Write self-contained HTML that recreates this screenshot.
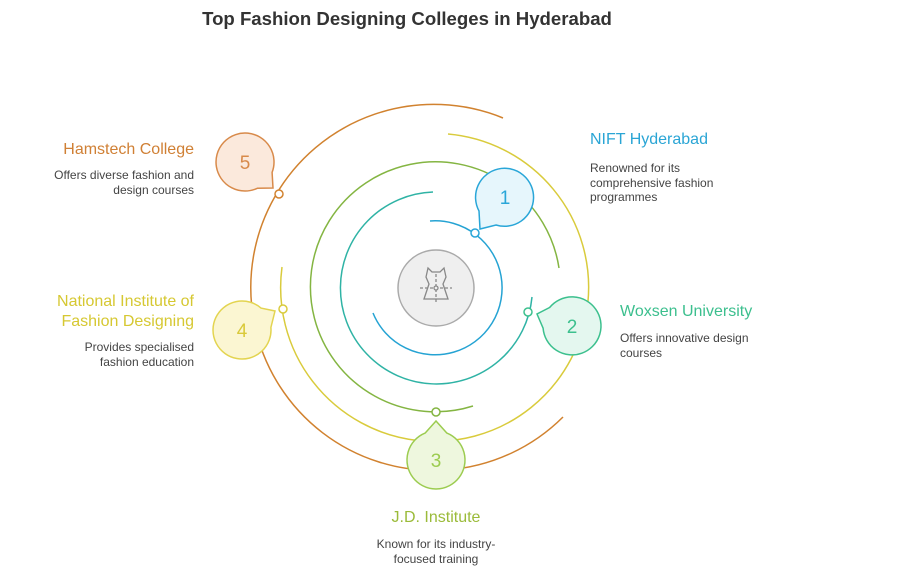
<!DOCTYPE html>
<html><head><meta charset="utf-8"><style>
body{margin:0;width:900px;height:569px;background:#fff;font-family:"Liberation Sans",sans-serif;position:relative;overflow:hidden}
.t{position:absolute;font-size:16px;white-space:nowrap}
.d{position:absolute;font-size:12px;color:#444;line-height:14.5px;white-space:nowrap}
.r{text-align:right}
</style></head><body>
<div style="position:absolute;left:0;width:814px;top:8px;text-align:center;font-weight:bold;font-size:18.6px;color:#333">Top Fashion Designing Colleges in Hyderabad</div>
<svg width="900" height="569" style="position:absolute;left:0;top:0" fill="none" stroke-width="1.5">
<path d="M430 221 A67 67 0 1 1 373 313" stroke="#25a3d3"/>
<path d="M433 192 A96 96 0 1 0 532 297" stroke="#2fb3a5"/>
<path d="M559 268 A125 125 0 1 0 473 406" stroke="#84b542"/>
<path d="M448 134 A154 154 0 1 1 282 267" stroke="#d9cb3c"/>
<path d="M503 118 A183 183 0 1 0 563 417" stroke="#d1822f"/>
<circle cx="436" cy="288" r="38" fill="#efefef" stroke="#aaa"/>
<g stroke="#888" stroke-width="1.3">
<path d="M428 268 l4 4 h8 l4 -4 l2 9 l-3 7 l5 15 h-24 l5 -15 l-3 -7 z"/>
<path d="M420 288 h32 M436 274 v30" stroke-dasharray="3 2"/>
<circle cx="436" cy="288" r="2" fill="#efefef"/>
</g>
<path d="M479 211 L480 229 L496 225 A29 29 0 1 0 479 211 Z" fill="#e6f6fc" stroke="#29a6d8"/>
<circle cx="475" cy="233" r="4" fill="#fff" stroke="#29a6d8"/>
<text x="505" y="204" font-size="19" fill="#29a6d8" text-anchor="middle" font-family="Liberation Sans">1</text>
<path d="M549.6 307.5 L537 314 L543.1 328.2 A29 29 0 1 0 549.6 307.5 Z" fill="#e4f7ef" stroke="#3cc08e"/>
<circle cx="528" cy="312" r="4" fill="#fff" stroke="#3cc08e"/>
<text x="572" y="333" font-size="19" fill="#3cc08e" text-anchor="middle" font-family="Liberation Sans">2</text>
<path d="M446.9 433.1 L436 421 L425.1 433.1 A29 29 0 1 0 446.9 433.1 Z" fill="#eef7de" stroke="#9ccc50"/>
<circle cx="436" cy="412" r="4" fill="#fff" stroke="#84b542"/>
<text x="436" y="467" font-size="19" fill="#9ccc50" text-anchor="middle" font-family="Liberation Sans">3</text>
<path d="M270.9 327.5 L275 311 L261 308.1 A29 29 0 1 0 270.9 327.5 Z" fill="#fbf6d2" stroke="#e3d450"/>
<circle cx="283" cy="309" r="4" fill="#fff" stroke="#d9cb3c"/>
<text x="242" y="337" font-size="19" fill="#d9c93a" text-anchor="middle" font-family="Liberation Sans">4</text>
<path d="M257.3 188.3 L273 188 L272.1 172.4 A29 29 0 1 0 257.3 188.3 Z" fill="#fbe9dc" stroke="#d88a4a"/>
<circle cx="279" cy="194" r="4" fill="#fff" stroke="#d1822f"/>
<text x="245" y="169" font-size="19" fill="#d88a4a" text-anchor="middle" font-family="Liberation Sans">5</text>
</svg>
<div class="t" style="left:590px;top:131px;color:#2aa5d5">NIFT Hyderabad</div>
<div class="d" style="left:590px;top:161px">Renowned for its<br>comprehensive fashion<br>programmes</div>
<div class="t" style="left:620px;top:303px;color:#3cbf8e">Woxsen University</div>
<div class="d" style="left:620px;top:331px">Offers innovative design<br>courses</div>
<div class="t" style="left:336px;width:200px;text-align:center;top:509px;color:#9bbb3a">J.D. Institute</div>
<div class="d" style="left:336px;width:200px;text-align:center;top:537px">Known for its industry-<br>focused training</div>
<div class="t r" style="right:706px;top:292px;line-height:20px;color:#d6c832">National Institute of<br>Fashion Designing</div>
<div class="d r" style="right:706px;top:340px">Provides specialised<br>fashion education</div>
<div class="t r" style="right:706px;top:141px;color:#d08035">Hamstech College</div>
<div class="d r" style="right:706px;top:168px">Offers diverse fashion and<br>design courses</div>
</body></html>
